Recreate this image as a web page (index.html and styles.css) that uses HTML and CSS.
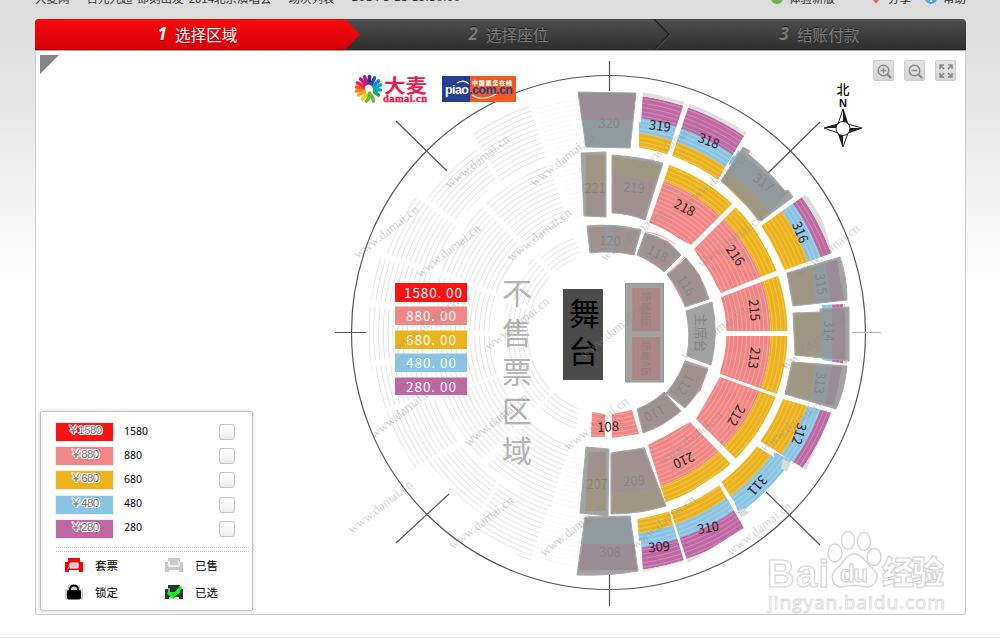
FILE: index.html
```html
<!DOCTYPE html>
<html lang="zh-CN">
<head>
<meta charset="utf-8">
<title>选择区域</title>
<link rel="stylesheet" href="styles.css">
</head>
<body>
<div class="page">
  <div class="topline">
    <nav class="crumbs"><span>大麦网</span><i>&gt;</i><span>百元九超</span><span class="gap">即刻出发</span><span class="gap">2014北京演唱会</span><i>&gt;</i><span>场次列表</span><i>&gt;</i><span class="date">2014-5-23 19:30:00</span></nav>
    <div class="links">
      <span class="link new"><svg width="12" height="12"><circle cx="6" cy="6" r="6" fill="#74ad46"/><path d="M3 7h6" stroke="#fff"/></svg>体验新版</span>
      <span class="link share"><svg width="12" height="12"><path d="M6 11.500L1 6a3 3 0 0 1 5-4 3 3 0 0 1 5 4z" fill="#ee6257"/></svg>分享</span>
      <span class="link"><svg width="12" height="12"><circle cx="6" cy="6" r="6" fill="#48a9e6"/><path d="M6 3v4M6 8v2" stroke="#fff" stroke-width="2"/></svg>帮助</span>
    </div>
  </div>
  <div class="steps">
    <svg class="steps-bg" width="931" height="31" viewBox="0 0 931 31">
      <defs>
        <linearGradient id="dark" x2="0" y2="1"><stop stop-color="#505050"/><stop offset="1" stop-color="#303030"/></linearGradient>
        <linearGradient id="red" x2="0" y2="1"><stop stop-color="#ff0a0c"/><stop offset="1" stop-color="#dc0009"/></linearGradient>
        <pattern id="hatch" width="3" height="3" patternUnits="userSpaceOnUse"><path d="M0 3L3 0" stroke="#000" stroke-opacity=".12" stroke-width=".8"/></pattern>
      </defs>
      <rect width="931" height="31" fill="url(#dark)"/>
      <path d="M0 0H310L325 15.500L310 31H0z" fill="url(#red)"/>
      <rect width="931" height="31" fill="url(#hatch)"/>
      <path d="M619 0L634 15.500L619 31" fill="none" stroke="#222" stroke-width="1.200"/>
      <path d="M620.500 31L635.500 15.500" fill="none" stroke="#5d5d5d" stroke-width=".8"/>
      <path d="M0 30.500H931" stroke="#000" stroke-opacity=".25"/>
    </svg>
    <div class="step on"><b>1</b>选择区域</div>
    <div class="step"><b>2</b>选择座位</div>
    <div class="step"><b>3</b>结账付款</div>
  </div>
  <div class="stage">
    <svg class="map" width="929" height="563" viewBox="36 51 929 563">
      <defs>
        <radialGradient id="rows" gradientUnits="userSpaceOnUse" cx="609" cy="333" r="4.300" spreadMethod="repeat"><stop offset="0" stop-color="#fff" stop-opacity=".25"/><stop offset=".24" stop-color="#fff" stop-opacity="0"/><stop offset=".8" stop-color="#fff" stop-opacity="0"/><stop offset="1" stop-color="#fff" stop-opacity=".25"/></radialGradient>
        <radialGradient id="ghost" gradientUnits="userSpaceOnUse" cx="609" cy="333" r="4.800" spreadMethod="repeat"><stop offset="0" stop-color="#e4e4e4"/><stop offset=".22" stop-color="#fff"/><stop offset=".82" stop-color="#fff"/><stop offset="1" stop-color="#e4e4e4"/></radialGradient>
        <g id="inner" fill="none">
          <circle cx="609" cy="333" r="139.500" stroke="#f08785" stroke-width="44"/>
          <circle cx="609" cy="333" r="170" stroke="#edb31d" stroke-width="17"/>
          <circle cx="609" cy="333" r="148" stroke="url(#rows)" stroke-width="61"/>
        </g>
        <g id="outerEnds" fill="none">
          <circle cx="609" cy="333" r="195.500" stroke="#edb31d" stroke-width="15"/>
          <circle cx="609" cy="333" r="210" stroke="#89c4e3" stroke-width="15"/>
          <circle cx="609" cy="333" r="228" stroke="#be67a3" stroke-width="22"/>
          <circle cx="609" cy="333" r="241" stroke="#dfe1df" stroke-width="4"/>
          <circle cx="609" cy="333" r="213" stroke="url(#rows)" stroke-width="50"/>
        </g>
        <g id="outerSide" fill="none">
          <circle cx="609" cy="333" r="199" stroke="#edb31d" stroke-width="26"/>
          <circle cx="609" cy="333" r="218.500" stroke="#89c4e3" stroke-width="14"/>
          <circle cx="609" cy="333" r="230.500" stroke="#be67a3" stroke-width="11"/>
          <circle cx="609" cy="333" r="238.500" stroke="#dcdcdc" stroke-width="5"/>
          <circle cx="609" cy="333" r="211" stroke="url(#rows)" stroke-width="50"/>
        </g>
        <g id="outerMid" fill="none">
          <circle cx="609" cy="333" r="195" stroke="#edb31d" stroke-width="17"/>
          <circle cx="609" cy="333" r="213" stroke="#89c4e3" stroke-width="19"/>
          <circle cx="609" cy="333" r="204" stroke="url(#rows)" stroke-width="36"/>
        </g>
        <clipPath id="cInner">
          <path d="M671 160L735 201L691 245L649 223zM740 203L778 270L721 293L694 249zM780 275L791 331H725L721 297zM790 336L780 395L720 374L725 336zM720 377L779 398L739 462L696 419zM690 422L732 465L667 507L648 445z"/>
        </clipPath>
        <clipPath id="cEnds">
          <path d="M643 91L685 100L667 156L639 150V122H641zM690 102L747 131L717 181L671 159zM669 506L718 483L744 528L688 563zM637 515L668 508L684 561L643 572L641 541H639z"/>
        </clipPath>
        <clipPath id="cSide">
          <path d="M761 226L805 195L818 203L832 253L785 270zM783 399L832 413L806 470L760 441zM822 305L845 304L847 364L822 360z"/>
        </clipPath>
        <clipPath id="cMid"><path d="M756 446L774 457V452L795 462L741 520L734 501L732 499L721 481z"/></clipPath>
        <path id="locked" d="M578 92L636 93L630 148L586 147zM581 153L606 152V217L584 216zM612 155Q640 157 663 163L645 220Q627 213 612 213zM587 226Q615 223 641 230L634 255Q612 250 590 253zM645 233Q668 238 681 255L664 272Q653 261 637 255zM686 258Q702 275 709 299L685 307Q680 288 667 275zM686 311L712 302Q719 333 711 365L687 356Q691 333 686 311zM685 361L708 369Q702 390 685 408L666 393Q679 378 685 361zM664 392L681 411Q664 426 643 433L637 409Q652 404 664 392zM586 447L609 449L608 516L580 513zM611 453L644 448L666 506Q640 514 611 514zM585 517L630 516L638 571Q610 576 577 575zM743 147L750 151L748 154Q768 170 785 191L788 190L793 197L761 221L758 220Q743 198 721 181zM787 273L840 257Q847 277 847 300L793 306zM793 313L820 312V309L849 307V361L795 355zM792 362L847 366Q845 389 836 409L785 394z"/>
      </defs>

      <!-- unsold half -->
      <g transform="matrix(-1 0 0 1 1218 0)" fill="url(#ghost)">
        <path d="M671 162L734 202L691 245L649 223zM738 204L778 270L721 293L694 249zM780 275L788 331H725L721 297zM788 336L780 395L720 374L725 336zM720 377L779 398L738 461L696 419zM690 422L731 465L667 507L648 445z"/>
        <path d="M690 102L747 131L717 181L671 159zM669 506L718 483L744 528L688 563zM761 226L805 195L832 253L785 270zM783 399L832 413L806 470L760 441zM756 446L790 462L741 515L721 481z"/>
        <path d="M743 147L793 197L761 221L721 181zM787 273L840 257L847 300L793 306zM793 313L849 307V361L795 355zM792 362L847 366L836 409L785 394zM645 233L681 255L664 272L637 255zM686 258L709 299L685 307L667 275zM686 311L712 302L711 365L687 356zM685 361L708 369L685 408L666 393zM664 392L681 411L643 433L637 409z"/>
        <path opacity=".3" d="M615 94L684 103L667 156L615 148zM615 155L663 163L645 220L615 213zM615 453L644 448L666 506L615 514zM615 517L668 511L684 559L615 575z"/>
      </g>

      <!-- seat rings -->
      <g clip-path="url(#cInner)"><use href="#inner"/></g>
      <g clip-path="url(#cEnds)"><use href="#outerEnds"/></g>
      <g clip-path="url(#cSide)"><use href="#outerSide"/></g>
      <g clip-path="url(#cMid)"><use href="#outerMid"/></g>
      <path fill="#dcdcdc" d="M783 459L791 463L787 472L781 468zM738 511L744 508L749 513L742 517z"/>
      <path fill="#f08785" d="M592 412L605 414V437L591 437zM612 414L632 410L639 434L612 438z"/>
      <path fill="url(#rows)" d="M592 412L605 414V437L591 437zM612 414L632 410L639 434L612 438z"/>
      <path fill="none" stroke="#f3a19f" d="M645 232Q660 233 675 244M667 274L685 257M686 361L708 368M664 392L680 412M644 447L650 464M612 453L625 451"/>

      <!-- colours below the closed sections -->
      <path fill="#be67a3" d="M579 93H636L633 120H582zM583 544H634L637 570H578z"/>
      <path fill="#89c4e3" d="M582 120H633L630 147H586zM585 518H630L634 544H583z"/>
      <path fill="#edb31d" d="M586 155H605V190H586zM612 156L662 164L655 184Q635 175 613 174zM587 475H606V511H585zM611 493Q635 495 658 487L665 506Q640 513 611 513z"/>
      <path fill="#f08785" d="M586 190H605V216H586zM613 174Q635 175 655 184L644 218L612 212zM589 452H606V475H587zM611 454L643 449L658 487Q635 495 611 493zM588 227H606V252H591zM613 226L640 231L633 254L613 252zM645 234L668 241L680 255L664 271L638 255zM686 259L700 275L708 299L685 306L668 275zM685 363L707 369L701 390L685 407L668 393zM664 394L680 411L662 425L643 432L638 409z"/>
      <path fill="#89c4e3" d="M606 226H613V252H606zM738 150L788 193L770 213Q753 189 727 172zM812 267L825 263L831 302L816 303zM820 311H832V358L820 357zM816 365L832 366L825 404L811 400z"/>
      <path fill="#edb31d" d="M727 172Q753 189 770 213L760 220L722 182zM788 273L812 267L816 303L794 305zM794 314L820 312V357L796 355zM793 363L816 365L811 400L786 394z"/>
      <path fill="#be67a3" d="M825 263L837 260L844 300L831 302zM832 309H845V359L832 358zM832 366L842 367L834 406L825 404z"/>
      <path fill="#89c4e3" d="M731 158L739 153L735 160L728 166z"/>

      <g class="num">
        <text transform="translate(609 122)">320</text><text transform="translate(595 187)">221</text><text transform="translate(634 187) rotate(5)">219</text><text transform="translate(610 240) rotate(3)">120</text><text transform="translate(658 253) rotate(28)">118</text><text transform="translate(687 285) rotate(58)">116</text><text transform="translate(701 333) rotate(90)">主席台</text><text transform="translate(686 385) rotate(120)">112</text><text transform="translate(655 414) rotate(153)">110</text><text transform="translate(597 483)">207</text><text transform="translate(634 480) rotate(-4)">209</text><text transform="translate(610 551)">308</text><text transform="translate(764 182) rotate(38)">317</text><text transform="translate(822 284) rotate(82)">315</text><text transform="translate(829 331) rotate(90)">314</text><text transform="translate(821 383) rotate(97)">313</text>
      </g>
      <use href="#locked" fill="#939393" fill-opacity=".86" stroke="#a4a8a6" stroke-width="1"/>
      <rect x="625.500" y="283.500" width="38" height="98.500" fill="#a2a2a2" stroke="#959595"/>
      <path fill="#ad8585" d="M632 288H660V331H632zM632 337H660V380H632z"/>
      <path d="M634.500 288V380M638.500 288V380M642.500 288V380M646.500 288V380M650.500 288V380M654.500 288V380M658.500 288V380" stroke="#9c8585" stroke-width=".6"/>
      <path fill="#a2a2a2" d="M631 331H661V337H631z"/>
      <g class="floor"><text transform="translate(646 310) rotate(90)">场地B区</text><text transform="translate(646 359) rotate(90)">场地A区</text></g>
      <g class="num">
        <text transform="translate(660 125) rotate(7)">319</text><text transform="translate(709 140) rotate(20)">318</text><text transform="translate(801 232) rotate(67)">316</text><text transform="translate(685 207) rotate(28)">218</text><text transform="translate(736 255) rotate(55)">216</text><text transform="translate(755 310) rotate(84)">215</text><text transform="translate(755 358) rotate(98)">213</text><text transform="translate(737 416) rotate(120)">212</text><text transform="translate(684 461) rotate(155)">210</text><text transform="translate(800 434) rotate(108)">312</text><text transform="translate(758 486) rotate(132)">311</text><text transform="translate(708 527) rotate(-10)">310</text><text transform="translate(659 546) rotate(-5)">309</text><text transform="translate(608 426) rotate(-3)">108</text>
      </g>

      <!-- outline and axes -->
      <g fill="none" stroke="#555" stroke-width="1.200">
        <circle cx="608.500" cy="332.500" r="257"/>
        <path d="M609.500 61V91M609.500 575V606M335 332.500H366M396 121L447 171M820 122L768 173M396 543L449 494M766 492L820 545"/>
        <path d="M852 332.500H881" stroke="#bbb"/>
      </g>

      <rect x="563" y="289" width="40" height="91" fill="#4b4b4b"/>
      <g class="stage-name"><text x="584.500" y="325">舞</text><text x="583.500" y="363">台</text></g>
      <g class="unsold"><text x="517" y="304">不</text><text x="517" y="344">售</text><text x="517" y="383">票</text><text x="517" y="422">区</text><text x="517" y="462">域</text></g>

      <path fill="#fb1213" d="M395 283H467V302H395z"/><path fill="#ee8785" d="M395 306.500H467V325H395z"/><path fill="#edb31d" d="M395 330.500H467V349H395z"/><path fill="#89c4e3" d="M395 353.500H467V372H395z"/><path fill="#be67a3" d="M395 377.500H467V395H395z"/>
      <g class="price"><text x="404" y="298" textLength="58">1580. 00</text><text x="406" y="321" textLength="50">880. 00</text><text x="406" y="345" textLength="50">680. 00</text><text x="406" y="368" textLength="50">480. 00</text><text x="406" y="392" textLength="50">280. 00</text></g>

      <g class="mark">
        <text transform="translate(358 259) rotate(-38)">www.damai.cn</text><text transform="translate(449 189) rotate(-38)">www.damai.cn</text><text transform="translate(534 187) rotate(-38)">www.damai.cn</text><text transform="translate(420 278) rotate(-38)">www.damai.cn</text><text transform="translate(511 262) rotate(-38)">www.damai.cn</text><text transform="translate(605 262) rotate(-38)">www.damai.cn</text><text transform="translate(688 206) rotate(-38)">www.damai.cn</text><text transform="translate(642 171) rotate(-38)">www.damai.cn</text><text transform="translate(702 268) rotate(-38)">www.damai.cn</text><text transform="translate(799 278) rotate(-38)">www.damai.cn</text><text transform="translate(489 351) rotate(-38)">www.damai.cn</text><text transform="translate(398 351) rotate(-38)">www.damai.cn</text><text transform="translate(584 359) rotate(-38)">www.damai.cn</text><text transform="translate(685 360) rotate(-38)">www.damai.cn</text><text transform="translate(785 370) rotate(-38)">www.damai.cn</text><text transform="translate(374 439) rotate(-38)">www.damai.cn</text><text transform="translate(468 447) rotate(-38)">www.damai.cn</text><text transform="translate(568 451) rotate(-38)">www.damai.cn</text><text transform="translate(662 465) rotate(-38)">www.damai.cn</text><text transform="translate(764 452) rotate(-38)">www.damai.cn</text><text transform="translate(352 534) rotate(-38)">www.damai.cn</text><text transform="translate(453 550) rotate(-38)">www.damai.cn</text><text transform="translate(544 557) rotate(-38)">www.damai.cn</text><text transform="translate(635 549) rotate(-38)">www.damai.cn</text><text transform="translate(731 556) rotate(-38)">www.damai.cn</text>
      </g>

      <path d="M40 55H59L40 74z" fill="#858585"/>

      <!-- ticket site logos -->
      <g transform="translate(368.500 89)" stroke-width="3.600" stroke-linecap="round" fill="none">
        <path d="M-5 1L-12 2" stroke="#f5821f"/><path d="M-5-1L-12-2" stroke="#ef5a28"/><path d="M-5-3L-11-6" stroke="#e8254c"/><path d="M-3-5L-8-10" stroke="#d5137f"/><path d="M-1-6L-4-12" stroke="#9d2687"/><path d="M1-6L1-12.500" stroke="#4b2a85"/><path d="M3-5L6-11" stroke="#2750a3"/><path d="M5-3L10-8" stroke="#1584c7"/><path d="M6-1L12-4" stroke="#16a9cf"/><path d="M6 1L12 1" stroke="#0ab0a6"/><path d="M6 3L10 6" stroke="#1ba861"/><path d="M-4 3L-10 6" stroke="#f9a51a"/><path d="M-2 6L-6 10" stroke="#fccb12"/>
        <path d="M1 4Q1 10-2 12M1 5Q4 7 5 12" stroke="#64b832"/>
      </g>
      <text class="damai" x="384" y="93" textLength="43" lengthAdjust="spacingAndGlyphs">大麦</text>
      <text class="damai-url" x="383" y="102" textLength="44">damai.cn</text>
      <path fill="#233f8f" d="M442 76H470V102H442z"/><path fill="#f15a22" d="M470 76H516V102H470z"/>
      <text class="piao" x="445" y="94" fill="#fff" textLength="24">piao</text><text class="piao" x="469" y="94" fill="#233f8f" textLength="44">.com.cn</text>
      <text class="piao-cn" x="472" y="85" textLength="40">中国票务在线</text>
      <path d="M457 83Q464 79 469 84M472 95Q482 102 496 94" fill="none" stroke="#fff" stroke-width="1.200"/>

      <!-- compass -->
      <text class="north" x="836.500" y="94">北</text><text class="north-n" x="839" y="107">N</text>
      <path d="M843 109L848 124L862 128L848 133L843 147L838 133L824 128L838 124z" fill="#fff" stroke="#222"/>
      <path d="M843 109L848 124L843 128zM862 128L848 133L843 128zM843 147L838 133L843 128zM824 128L838 124L843 128z" fill="#231b18"/>
      <circle cx="843" cy="128.500" r="7" fill="#fff" stroke="#222"/>

      <!-- corner watermark -->
      <g class="baidu">
        <text class="bai" x="767" y="587" textLength="62">Bai</text>
        <g stroke-width="1.500"><ellipse cx="835" cy="553" rx="7" ry="9"/><ellipse cx="848" cy="540.500" rx="6.500" ry="9"/><ellipse cx="864" cy="541.500" rx="6.500" ry="9"/><ellipse cx="874" cy="557" rx="7" ry="8.500"/><path d="M854 554C846 554 844 563 837 568C829 575 832 587 842 587Q854 584 866 587C877 587 881 575 872 568C865 563 863 554 854 554z"/></g>
        <text class="du" x="840" y="582" textLength="28">du</text>
        <text class="jingyan" x="882" y="584" textLength="62">经验</text>
        <text class="url" x="768" y="609" textLength="177">jingyan.baidu.com</text>
      </g>
    </svg>

    <div class="tools">
      <button><svg width="20" height="20" viewBox="0 0 20 20"><circle cx="9.500" cy="9.500" r="5.300"/><path d="M13.500 13.500L17 17" stroke-width="2.300"/><path d="M6.700 9.500H12.300M9.500 6.700V12.300"/></svg></button>
      <button><svg width="20" height="20" viewBox="0 0 20 20"><circle cx="9.500" cy="9.500" r="5.300"/><path d="M13.500 13.500L17 17" stroke-width="2.300"/><path d="M6.700 9.500H12.300"/></svg></button>
      <button><svg width="20" height="20" viewBox="0 0 20 20"><path d="M4 8V4H8M4.500 4.500L8 8M12 4H16V8M15.500 4.500L12 8M4 12V16H8M4.500 15.500L8 12M16 12V16H12M15.500 15.500L12 12" stroke-width="1.500"/></svg></button>
    </div>

    <div class="legend">
      <div class="row"><span class="chip c1">￥1580</span><span class="name">1580</span><span class="box"></span></div>
      <div class="row"><span class="chip c2">￥880</span><span class="name">880</span><span class="box"></span></div>
      <div class="row"><span class="chip c3">￥680</span><span class="name">680</span><span class="box"></span></div>
      <div class="row"><span class="chip c4">￥480</span><span class="name">480</span><span class="box"></span></div>
      <div class="row"><span class="chip c5">￥280</span><span class="name">280</span><span class="box"></span></div>
      <div class="states">
        <span><svg width="18" height="16"><path d="M3 1H15V5H18V15H14V13H4V15H0V5H3z" fill="#fe0000"/><path d="M5 6H13V11H5z" fill="#ccc" stroke="#fff"/><path d="M3 12L5 6" stroke="#aaa"/></svg>套票</span>
        <span><svg width="18" height="16"><path d="M3 1H15V5H18V15H14V13H4V15H0V5H3z" fill="#c9c9c9"/><path d="M4 4V9H14V4" fill="none" stroke="#fff" stroke-width="1.300"/></svg>已售</span>
        <span><svg width="18" height="16"><path d="M3 1H15V5H18V15H14V13H4V15H0V5H3z" fill="#ccc"/><path d="M5 7V5a4 3.500 0 0 1 8 0V7" fill="none" stroke="#000" stroke-width="2"/><rect x="2" y="6" width="14" height="9.500" rx="2"/></svg>锁定</span>
        <span><svg width="18" height="16"><path d="M3 1H15V5H18V15H14V13H4V15H0V5H3z" fill="#333"/><path d="M4 4V9H14V4" fill="none" stroke="#fff"/><path d="M3 8L8 13L16 3" fill="none" stroke="#0f0" stroke-width="3.200"/></svg>已选</span>
      </div>
    </div>
  </div>
</div>
</body>
</html>
```
FILE: styles.css
```css
* { box-sizing: border-box; }
body {
  margin: 0;
  height: 638px;
  overflow: hidden;
  background: linear-gradient(#dcdcdc 0, #e6e6e6 100px, #fff 290px);
  border-bottom: 1px solid #e8e8e8;
  font: 12px "Noto Sans", "Noto Sans CJK SC", sans-serif;
  color: #333;
}
.page {
  width: 931px;
  margin-left: 35px;
}
.topline {
  height: 19px;
  overflow: hidden;
  display: flex;
  justify-content: space-between;
  align-items: flex-start;
  line-height: 16px;
}
.crumbs, .links { display: flex; margin-top: -10px; font: 11.5px/16px "Noto Sans CJK SC", sans-serif; }
.crumbs i { font-style: normal; margin: 0 7px 0 5px; font-size: 9px; }
.gap { margin-left: 5px; }
.date { font-family: "DejaVu Sans", sans-serif; font-size: 11px; letter-spacing: -.05px; }
.link { display: flex; align-items: center; gap: 6px; }
.new { margin-right: 35px; }
.share { margin-right: 14px; }
.steps {
  height: 31px;
  border-radius: 4px 4px 0 0;
  overflow: hidden;
  display: grid;
  grid-template-columns: 325px 297px 309px;
  position: relative;
}
.steps-bg { position: absolute; left: 0; top: 0; }
.step {
  position: relative;
  display: flex;
  align-items: center;
  justify-content: center;
  gap: 8px;
  padding-bottom: 2px;
  font: 15.6px "Noto Sans CJK SC", sans-serif;
  color: #7b7b7b;
  text-shadow: 0 -1px #222;
}
.step:nth-of-type(3) { padding-left: 16px; }
.step b { font: italic bold 17px "Open Sans", sans-serif; }
.step.on { color: #fff; text-shadow: 0 1px #a00; }
.stage {
  position: relative;
  height: 565px;
  background: #fff;
  border: 1px solid #ccc;
  border-top-color: #aaa;
  border-radius: 0 0 3px 3px;
}
.map { display: block; }
.map text { font-family: "Noto Sans CJK SC", sans-serif; }
.num text { font-size: 13px; text-anchor: middle; dominant-baseline: central; fill: #302020; }
.floor text { font-size: 10px; text-anchor: middle; dominant-baseline: central; fill: #928080; }
.stage-name text { font-size: 31px; text-anchor: middle; fill: #000; }
.unsold text { font-size: 30px; text-anchor: middle; fill: #b3b3b3; }
.map .price text { font-size: 13.5px; fill: #fff; white-space: pre; }
.map .mark text { font-family: "Liberation Serif", serif; font-size: 13px; fill: #888; fill-opacity: .38; }
.map .damai { font-size: 19px; font-weight: 700; fill: #e6204c; }
.map .damai-url { font-family: "Liberation Serif", serif; font-size: 10.5px; font-weight: bold; fill: #e6204c; stroke: #e6204c; stroke-width: .4px; }
.map .piao { font-family: "Liberation Sans", sans-serif; font-size: 12.5px; font-weight: bold; }
.map .piao-cn { font-size: 6px; font-weight: 900; fill: #fff; }
.map .north { font-size: 13px; font-weight: 500; fill: #111; }
.map .north-n { font-family: "Liberation Sans", sans-serif; font-size: 11px; font-weight: bold; fill: #111; }
.baidu { fill: #fff; stroke: #d6d6d6; stroke-width: 1.2px; }
.map .bai { font: bold 38px "Liberation Sans", sans-serif; }
.map .du { font: bold 24px "Liberation Sans", sans-serif; }
.map .jingyan { font-size: 32px; font-weight: 900; }
.map .url { font: 19px "Open Sans", sans-serif; stroke-width: .9px; stroke: #dcdcdc; }
.tools { position: absolute; right: 9px; top: 9px; display: flex; gap: 10px; }
.tools button {
  width: 21px;
  height: 21px;
  padding: 0;
  border: 1px solid #ccc;
  border-radius: 2px;
  background: linear-gradient(#e4e4e4, #d4d4d4);
}
.tools svg { display: block; fill: none; stroke: #888; stroke-width: 1.4px; }
.legend {
  position: absolute;
  left: 4px;
  top: 360px;
  width: 213px;
  height: 200px;
  padding: 8px 3px 0 15px;
  background: #fff;
  border: 1px solid #c2c2c2;
  border-radius: 2px;
  box-shadow: 0 0 4px rgba(0,0,0,.2);
}
.row { display: flex; align-items: center; height: 24.2px; padding-right: 14px; }
.chip {
  width: 57px;
  height: 18px;
  font: 11.5px/15px "Liberation Sans", "Noto Sans CJK SC", sans-serif;
  letter-spacing: -.6px;
  text-align: center;
  color: #777;
  text-shadow: 1px 0 #fff, -1px 0 #fff, 0 1px #fff, 0 -1px #fff, 1px 1px #fff, -1px -1px #fff;
  box-shadow: 0 0 0 1px #eee;
}
.c1 { background: #fb1213; }
.c2 { background: #ee8785; }
.c3 { background: #edb31d; }
.c4 { background: #89c4e3; }
.c5 { background: #be67a3; }
.name { flex: 1; margin: -3px 0 0 11px; font: 10.5px "Noto Sans", sans-serif; color: #000; }
.box {
  width: 16px;
  height: 16px;
  border: 1px solid #c4c4c4;
  border-radius: 3px;
  background: linear-gradient(#fff, #eee);
}
.states {
  margin-top: 6px;
  border-top: 1px dotted #bbb;
  display: grid;
  grid-template-columns: 100px 1fr;
  position: relative;
  padding-top: 4px;
}
.states::before { content: ""; position: absolute; left: 0; right: 0; top: 3px; border-top: 1px dotted #bbb; }
.states span { display: flex; align-items: center; gap: 12px; height: 27px; padding-left: 9px; font: 11.5px "Noto Sans CJK SC", sans-serif; color: #000; }
```
